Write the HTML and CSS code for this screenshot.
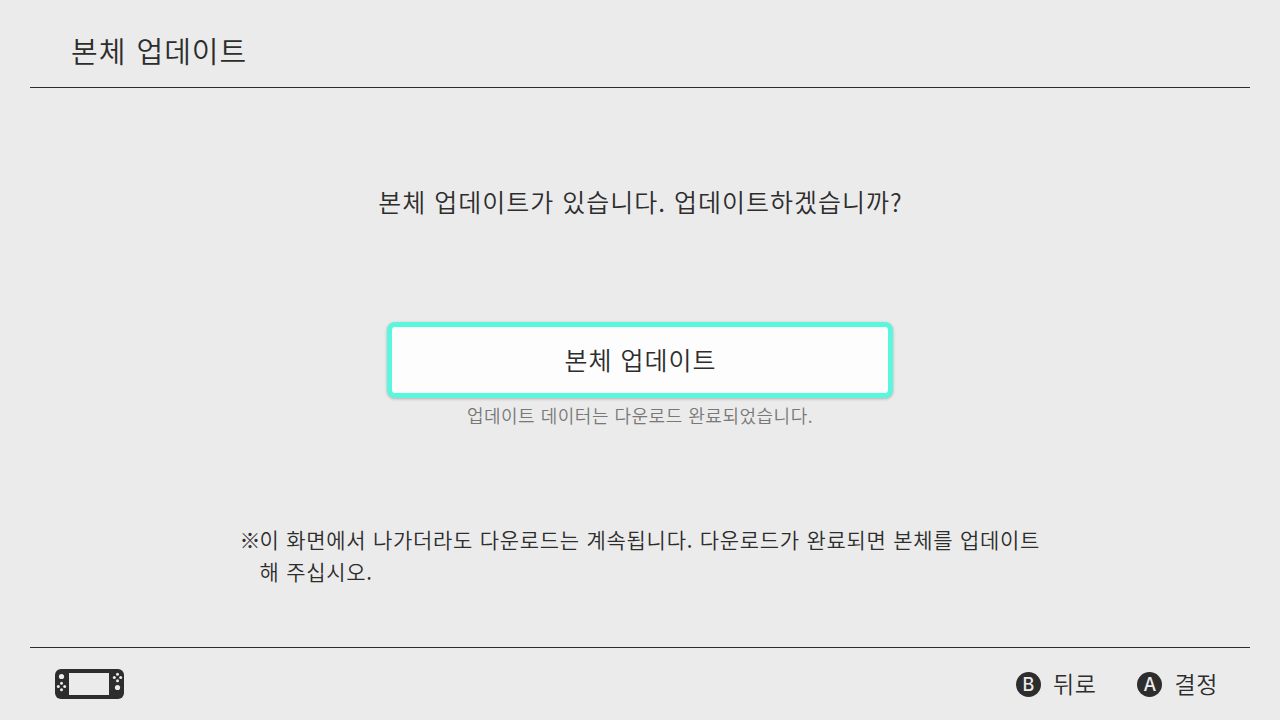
FILE: index.html
```html
<!DOCTYPE html>
<html lang="ko">
<head>
    <meta charset="UTF-8">
    <meta name="viewport" content="width=device-width, initial-scale=1.0">
    <title>본체 업데이트</title>
    <link rel="stylesheet" href="styles.css">
</head>
<body>
    <header class="header">
        <h1 class="title">본체 업데이트</h1>
    </header>

    <main class="content">
        <p class="message">본체 업데이트가 있습니다. 업데이트하겠습니까?</p>
        <button class="update-btn">본체 업데이트</button>
        <p class="status">업데이트 데이터는 다운로드 완료되었습니다.</p>
        <div class="note">
            <span class="note-mark">※</span>
            <p class="note-text">이 화면에서 나가더라도 다운로드는 계속됩니다. 다운로드가 완료되면 본체를 업데이트<br>해 주십시오.</p>
        </div>
    </main>

    <footer class="footer">
        <svg class="console-icon" width="69" height="30" viewBox="0 0 69 30">
            <rect width="69" height="30" rx="6" fill="#2d2d2d"/>
            <rect x="14" y="4" width="40" height="22" fill="#ebebeb"/>
            <g fill="#ebebeb">
                <circle cx="6.5" cy="7.5" r="2.6"/>
                <circle cx="6.5" cy="14.3" r="1.5"/>
                <circle cx="3.3" cy="17.5" r="1.5"/>
                <circle cx="9.7" cy="17.5" r="1.5"/>
                <circle cx="6.5" cy="20.7" r="1.5"/>
                <circle cx="62.5" cy="18.5" r="2.6"/>
                <circle cx="62.5" cy="5.3" r="1.5"/>
                <circle cx="59.3" cy="8.5" r="1.5"/>
                <circle cx="65.7" cy="8.5" r="1.5"/>
                <circle cx="62.5" cy="11.7" r="1.5"/>
            </g>
        </svg>
        <div class="hints">
            <div class="hint"><span class="key">B</span><span class="hint-label">뒤로</span></div>
            <div class="hint"><span class="key">A</span><span class="hint-label">결정</span></div>
        </div>
    </footer>
</body>
</html>
```
FILE: styles.css
```css
* {
    margin: 0;
    padding: 0;
    box-sizing: border-box;
}

body {
    font-family: "Noto Sans CJK KR", sans-serif;
    font-weight: 350;
    background: #ebebeb;
    color: #2d2d2d;
    height: 100vh;
    padding: 0 30px;
    display: flex;
    flex-direction: column;
    overflow: hidden;
}

.header {
    height: 88px;
    padding: 27px 0 0 41px;
    border-bottom: 1px solid #2d2d2d;
}

.title {
    font-size: 29px;
    line-height: 46px;
    font-weight: inherit;
    letter-spacing: 1px;
    word-spacing: 1px;
}

.content {
    flex: 1;
    display: flex;
    flex-direction: column;
    align-items: center;
    padding-top: 93px;
}

.message {
    font-size: 25px;
    line-height: 40px;
    letter-spacing: 1px;
    padding-left: 1px;
}

.update-btn {
    width: 506px;
    height: 76px;
    margin-top: 101px;
    padding: 0 0 2px 1px;
    border: 5px solid #5af7dc;
    border-radius: 8px;
    background: #fdfdfd;
    color: #2d2d2d;
    font-family: inherit;
    font-weight: inherit;
    font-size: 25px;
    letter-spacing: 1px;
    box-shadow: 0 1px 3px rgba(0, 0, 0, 0.25);
}

.status {
    margin-top: 5px;
    font-size: 18px;
    line-height: 24px;
    letter-spacing: 0.5px;
    color: #787878;
}

.note {
    width: 801px;
    margin-top: 96px;
    display: flex;
    font-size: 21px;
    line-height: 32px;
    letter-spacing: 0.72px;
}

.note-mark {
    width: 20px;
}

.note-text {
    white-space: nowrap;
}

.footer {
    height: 73px;
    padding: 0 32px 0 25px;
    border-top: 1px solid #2d2d2d;
    display: flex;
    align-items: center;
    justify-content: space-between;
}

.hints {
    display: flex;
    gap: 41px;
}

.hint {
    display: flex;
    align-items: center;
    gap: 12px;
    font-size: 23px;
}

.hint-label {
    margin-top: -2px;
    letter-spacing: 0.6px;
}

.key {
    width: 25px;
    height: 25px;
    border-radius: 50%;
    background: #2d2d2d;
    color: #ebebeb;
    font-family: Inter, sans-serif;
    font-size: 18px;
    font-weight: 500;
    line-height: 25px;
    text-align: center;
}
```
